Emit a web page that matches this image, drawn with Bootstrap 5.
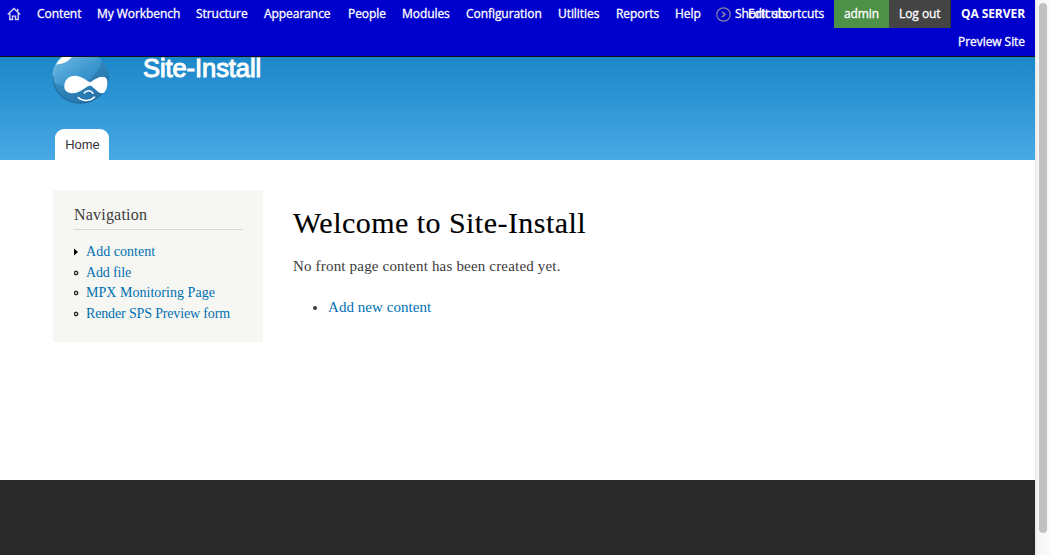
<!DOCTYPE html>
<html lang="en">
<head>
<meta charset="utf-8">
<meta name="viewport" content="width=device-width, initial-scale=1">
<title>Welcome to Site-Install | Site-Install</title>
<link href="https://cdn.jsdelivr.net/npm/bootstrap@5.3.0/dist/css/bootstrap.min.css" rel="stylesheet">
<style>
  body { height: 555px; overflow: hidden; background: #fff; color: #3b3b3b; font-family: "Liberation Serif", serif; }
  a { color: #0071b3; text-decoration: none; }
  .admin-bar { height: 57px; background: #0000cd; border-bottom: 1px solid #101014; font: 12px/28px "Open Sans", sans-serif; letter-spacing: -.06px; white-space: nowrap; z-index: 2; }
  .admin-bar a { color: #fff; -webkit-text-stroke: .3px #fff; }
  .home-link { width: 37px; padding: 7px 0 0 7px; line-height: 0; }
  .main-menu { grid-template-columns: 60px 99px 68px 84px 54px 64px 92px 58px 59px 41px; }
  .shortcut-toggle { width: 118px; }
  .shortcut-toggle svg { margin: 7px 4px 0 0; }
  .edit-link { left: 32px; top: 0; }
  .user-link { width: 55px; background: #4d9148; }
  .logout-link { width: 62px; padding-left: 10px; background: #444; border-right: 1px solid #333; }
  .server-links { padding-right: 10px; }
  .admin-bar .server-name { letter-spacing: -.06px; -webkit-text-stroke: 0; }
  .site-header { height: 103px; background: linear-gradient(#1b87c9, #48a9e4); }
  .druplicon { margin: -13px 0 0 50px; }
  .site-name { margin: -5px 0 0 33px; font: 25.5px/32px "Liberation Sans", sans-serif; letter-spacing: -.08px; color: #fff; -webkit-text-stroke: 1px #fff; }
  .home-tab { margin-left: 55px; width: 54px; height: 31px; padding-left: 1px; border-radius: 9px 9px 0 0; background: #fff; color: #333; font: 13px/31px "Liberation Sans", sans-serif; }
  .page-area { height: 320px; padding: 30px 0 0 53px; }
  .nav-block { width: 210px; height: 152px; padding: 14px 20px 0 21px; background: #f6f6f2; }
  .nav-block h2 { height: 26px; margin: 0 0 12px; border-bottom: 1px solid #d6d6d6; font-size: 16px; line-height: 22px; letter-spacing: .2px; color: #3b3b3b; }
  .nav-block li { height: 20.6px; font-size: 14px; line-height: 20px; letter-spacing: .03px; white-space: nowrap; }
  .nav-block li svg { width: 6px; height: 8px; margin-right: 6px; flex: none; }
  .nav-block .tight { letter-spacing: -.15px; }
  .welcome { margin: 14px 0 0 30px; }
  .welcome h1 { margin: 0; font-size: 30px; line-height: 37px; letter-spacing: .46px; color: #000; -webkit-text-stroke: .15px #000; }
  .welcome p { margin: 14px 0 0; font-size: 15px; line-height: 22px; letter-spacing: .18px; }
  .welcome ul { margin: 19px 0 0; padding-left: 35px; font-size: 15px; line-height: 22px; letter-spacing: .05px; }
  .footer-area { height: 75px; background: #292929; }
  .scroll-track { width: 15px; padding: 3px 3px 0 4px; background: linear-gradient(90deg, #e7e7e7, #f6f6f6 3px, #fafafa); }
  .scroll-thumb { height: 530px; border-radius: 4px; background: #c1c1c1; }
</style>
</head>
<body class="d-flex">
<div class="flex-grow-1">
  <nav class="admin-bar d-flex position-relative" aria-label="Administration">
    <a class="home-link" href="#" aria-label="Home"><svg width="15" height="14" viewBox="0 0 15 14" fill="none" stroke="#d5d5ed" stroke-width="1.4"><path d="M.8 7.6 7 1.5l6.2 6.1M2.8 6.3v6.2h2.7V9.1h3v3.4h2.7V6.3M10.7 4.5V1.8"/></svg></a>
    <div class="main-menu d-grid">
      <a href="#">Content</a><a href="#">My Workbench</a><a href="#">Structure</a><a href="#">Appearance</a><a href="#">People</a><a href="#">Modules</a><a href="#">Configuration</a><a href="#">Utilities</a><a href="#">Reports</a><a href="#">Help</a>
    </div>
    <div class="shortcut-toggle position-relative">
      <a class="d-flex align-items-start" href="#"><svg width="15" height="15" viewBox="0 0 15 15" fill="none" stroke="#8585a5"><circle cx="7.5" cy="7.5" r="6.7" stroke-width="1.2"/><path d="m6 4.8 3 2.7-3 2.7" stroke-width="1.6"/></svg>Shortcuts</a>
      <a class="edit-link position-absolute" href="#">Edit shortcuts</a>
    </div>
    <div class="d-flex align-self-start">
      <a class="user-link text-center" href="#">admin</a>
      <a class="logout-link" href="#">Log out</a>
    </div>
    <div class="server-links flex-grow-1 text-end">
      <a class="d-block fw-bold server-name" href="#">QA SERVER</a>
      <a class="d-block" href="#">Preview Site</a>
    </div>
  </nav>
  <header class="site-header d-flex flex-column justify-content-between">
    <div class="d-flex">
      <svg class="druplicon" width="60" height="61" viewBox="0 0 60 61">
        <defs><linearGradient id="drop" x1=".15" x2=".8" y2="1"><stop stop-color="#7cc0e6"/><stop offset=".5" stop-color="#3d98d0"/><stop offset="1" stop-color="#2c7fb8"/></linearGradient></defs>
        <path d="M27 1c4 4 8 6 14 8 11 5 17.500 12 17.500 23 0 16-12.500 27.500-28 27.500S2.500 48 2.500 32C2.500 22 8 14 16 10 22 7 25 5 27 1Z" fill="url(#drop)"/>
        <path d="M3 38c9 6 27 7 38-4 8-8 11-14 10-18 5 4 7.500 9 7.500 16 0 16-12.500 27.500-28 27.500C16 59.500 5 51 3 38Z" fill="#14588c" opacity=".3"/>
        <path d="M3 32C3 48 15 59 30.500 59S58 48 58 32" fill="none" stroke="#1b5f90" opacity=".8"/>
        <path d="M3.600 32C3.600 25 7 19 12 15" fill="none" stroke="#7dc0e6" stroke-width="1" opacity=".6"/>
        <path d="M6 21C9 14 15 11 24 7c-1 6-4 9-9 11.500-4 2-7 1-9 2.500Z" fill="#fff"/>
        <path d="M14.300 42.500C14.300 36 18.500 31.700 25 31.700c6 0 10 4 15 6.600 4-2.300 8-5.600 12.500-5.600 4 0 5.400 3.300 4.800 7.800-.6 5-2.300 8.800-5.600 8.800-4 0-7.200-6-11.700-7.800-5.500 1.700-10 7.800-17 7.800-5.500 0-8.700-2.400-8.700-6.800Z" fill="#fff"/>
        <path d="M34.300 49c2-2.900 6.500-3 8.700.3M28.200 53.500c4.500 4.200 12.300 3.800 16.300-.5" fill="none" stroke="#fff" stroke-width="1.500" stroke-linecap="round"/>
      </svg>
      <div class="site-name">Site-Install</div>
    </div>
    <a class="home-tab text-center" href="#">Home</a>
  </header>
  <main class="page-area d-flex align-items-start">
    <aside class="nav-block">
      <h2 class="fw-normal">Navigation</h2>
      <ul class="list-unstyled mb-0">
        <li class="d-flex align-items-center"><svg viewBox="0 0 6 8"><path d="m0 .5 4 3.500-4 3.500Z"/></svg><a href="#">Add content</a></li>
        <li class="d-flex align-items-center"><svg viewBox="0 0 6 8"><circle cx="2" cy="4" r="1.900" fill="#bbb" stroke="#000"/></svg><a class="tight" href="#">Add file</a></li>
        <li class="d-flex align-items-center"><svg viewBox="0 0 6 8"><circle cx="2" cy="4" r="1.900" fill="#bbb" stroke="#000"/></svg><a href="#">MPX Monitoring Page</a></li>
        <li class="d-flex align-items-center"><svg viewBox="0 0 6 8"><circle cx="2" cy="4" r="1.900" fill="#bbb" stroke="#000"/></svg><a class="tight" href="#">Render SPS Preview form</a></li>
      </ul>
    </aside>
    <section class="welcome">
      <h1 class="fw-normal">Welcome to Site-Install</h1>
      <p>No front page content has been created yet.</p>
      <ul><li><a href="#">Add new content</a></li></ul>
    </section>
  </main>
  <footer class="footer-area"></footer>
</div>
<div class="scroll-track flex-shrink-0"><div class="scroll-thumb"></div></div>
<script src="https://cdn.jsdelivr.net/npm/bootstrap@5.3.0/dist/js/bootstrap.bundle.min.js"></script>
</body>
</html>
